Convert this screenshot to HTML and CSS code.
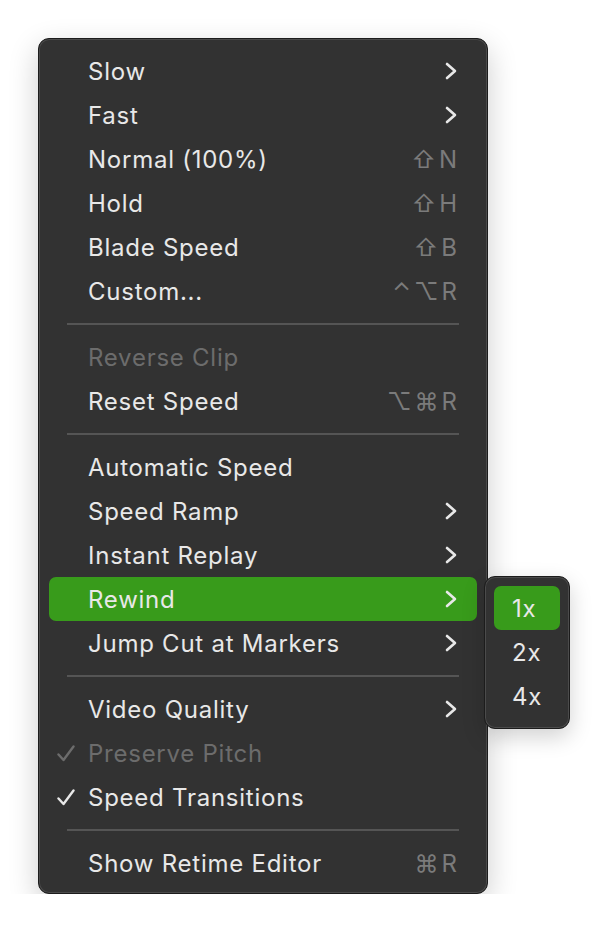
FILE: index.html
```html
<!DOCTYPE html>
<html lang="en">
	<head>
		<meta charset="UTF-8" />
		<title>Retime menu</title>
		<link rel="stylesheet" href="styles.css">
	</head>
	<body>
		<div class="menu">
			<div class="item"><span class="label">Slow</span><svg class="chev" viewBox="0 0 12 18"><polyline points="2,2 10,9 2,16" /></svg></div>
			<div class="item"><span class="label">Fast</span><svg class="chev" viewBox="0 0 12 18"><polyline points="2,2 10,9 2,16" /></svg></div>
			<div class="item"><span class="label">Normal (100%)</span><span class="keys">⇧N</span></div>
			<div class="item"><span class="label">Hold</span><span class="keys">⇧H</span></div>
			<div class="item"><span class="label">Blade Speed</span><span class="keys">⇧B</span></div>
			<div class="item"><span class="label">Custom...</span><span class="keys">⌃⌥R</span></div>
			<div class="sep"></div>
			<div class="item disabled"><span class="label">Reverse Clip</span></div>
			<div class="item"><span class="label">Reset Speed</span><span class="keys">⌥⌘R</span></div>
			<div class="sep"></div>
			<div class="item"><span class="label">Automatic Speed</span></div>
			<div class="item"><span class="label">Speed Ramp</span><svg class="chev" viewBox="0 0 12 18"><polyline points="2,2 10,9 2,16" /></svg></div>
			<div class="item"><span class="label">Instant Replay</span><svg class="chev" viewBox="0 0 12 18"><polyline points="2,2 10,9 2,16" /></svg></div>
			<div class="item active">
				<span class="label">Rewind</span><svg class="chev" viewBox="0 0 12 18"><polyline points="2,2 10,9 2,16" /></svg>
				<div class="submenu">
					<div class="subitem active">1x</div>
					<div class="subitem">2x</div>
					<div class="subitem">4x</div>
				</div>
			</div>
			<div class="item"><span class="label">Jump Cut at Markers</span><svg class="chev" viewBox="0 0 12 18"><polyline points="2,2 10,9 2,16" /></svg></div>
			<div class="sep"></div>
			<div class="item"><span class="label">Video Quality</span><svg class="chev" viewBox="0 0 12 18"><polyline points="2,2 10,9 2,16" /></svg></div>
			<div class="item disabled"><svg class="check" viewBox="0 0 18 17"><polyline points="1.5,9.5 6.5,15 16.5,1.5" /></svg><span class="label">Preserve Pitch</span></div>
			<div class="item"><svg class="check" viewBox="0 0 18 17"><polyline points="1.5,9.5 6.5,15 16.5,1.5" /></svg><span class="label">Speed Transitions</span></div>
			<div class="sep"></div>
			<div class="item"><span class="label">Show Retime Editor</span><span class="keys">⌘R</span></div>
		</div>
	</body>
</html>
```

FILE: styles.css
```css
* {
	margin: 0;
	padding: 0;
	box-sizing: border-box;
}
body {
	background-color: #fff;
	font-family: Inter, "Noto Sans", "DejaVu Sans", sans-serif;
}
.menu {
	width: 450px;
	margin: 38px 0 0 38px;
	padding: 10px 10px 8px;
	background-color: #323232;
	border: 1px solid #1c1c1c;
	border-radius: 11px;
	box-shadow: inset 0 0 0 1px #4b4b4b, 0 10px 30px rgba(0, 0, 0, 0.2);
}
.item {
	position: relative;
	display: flex;
	align-items: center;
	height: 44px;
	padding: 0 20px 0 39px;
	border-radius: 7px;
	color: #e8e8e8;
	font-size: 24px;
}
.item .label {
	flex: 1;
	letter-spacing: 0.75px;
	padding-top: 1px;
}
.item.disabled {
	color: #6c6c6c;
}
.item.active {
	background-color: #389b1b;
}
.check {
	position: absolute;
	left: 8px;
	top: 14px;
	width: 18px;
	height: 17px;
	fill: none;
	stroke: currentColor;
	stroke-width: 2.4;
	stroke-linecap: round;
	stroke-linejoin: round;
}
.keys {
	color: #7b7b7b;
	font-family: Inter, "DejaVu Sans", sans-serif;
	letter-spacing: 3px;
	margin-right: -3px;
}
.chev {
	width: 12px;
	height: 18px;
	fill: none;
	stroke: #e8e8e8;
	stroke-width: 2.6;
	stroke-linecap: round;
	stroke-linejoin: round;
}
.sep {
	height: 22px;
	display: flex;
	align-items: center;
	padding: 0 18px 0 18px;
}
.sep::before {
	content: "";
	flex: 1;
	height: 2px;
	background-color: #555;
}
.submenu {
	position: absolute;
	left: 435px;
	top: -1px;
	width: 86px;
	padding: 9px 9px 10px;
	background-color: #323232;
	border: 1px solid #1c1c1c;
	border-radius: 11px;
	box-shadow: inset 0 0 0 1px #4b4b4b, 0 8px 22px rgba(0, 0, 0, 0.18);
}
.subitem {
	height: 44px;
	line-height: 46px;
	padding-left: 18px;
	border-radius: 7px;
	color: #e8e8e8;
	font-size: 24px;
	letter-spacing: 0.75px;
}
.subitem.active {
	background-color: #389b1b;
}
```
